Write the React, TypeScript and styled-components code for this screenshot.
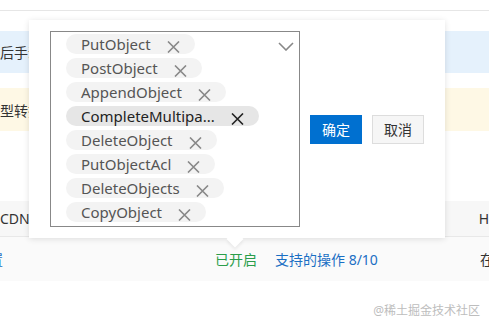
import styled, { createGlobalStyle } from "styled-components"

const GlobalStyle = createGlobalStyle`
  html, body {
    margin: 0;
    padding: 0;
    background: #fff;
  }
  body {
    font-family: "Noto Sans", "Noto Sans CJK SC", sans-serif;
    color: #333;
    overflow: hidden;
  }
`

const Page = styled.div`
  position: relative;
  width: 489px;
  height: 319px;
  overflow: hidden;
  display: flex;
  flex-direction: column;
`
const TopRule = styled.div`
  margin-top: 10px;
  height: 1px;
  background: #e6e6e6;
`
const Notice = styled.div<{ $tone: "info" | "warn" }>`
  display: flex;
  align-items: center;
  height: ${(p) => (p.$tone === "info" ? "44px" : "45px")};
  margin-top: ${(p) => (p.$tone === "info" ? "20px" : "15px")};
  background: ${(p) => (p.$tone === "info" ? "#e5f1fc" : "#fef8e5")};
  font-size: 14px;
  white-space: nowrap;
  color: #333;
`
const NoticeText = styled.span<{ $shift: number }>`
  margin-left: ${(p) => p.$shift}px;
`
const Table = styled.div`
  margin-top: 70px;
  display: flex;
  flex-direction: column;
`
const HeadRow = styled.div`
  display: flex;
  align-items: center;
  justify-content: space-between;
  height: 35px;
  background: #f7f7f7;
  border-bottom: 1px solid #e8e8e8;
  font-size: 14px;
  color: #333;
  white-space: nowrap;
`
const BodyRow = styled.div`
  display: flex;
  align-items: center;
  height: 44px;
  background: #fafafa;
  font-size: 14px;
  white-space: nowrap;
`
const Cell = styled.span<{ $color?: string; $width?: number }>`
  color: ${(p) => p.$color ?? "#333"};
  ${(p) => (p.$width ? `width: ${p.$width}px;` : "")}
  flex-shrink: 0;
`
const EdgeCell = styled(Cell)`
  margin-left: -25px;
  width: 240px;
`
const Watermark = styled.div`
  align-self: flex-end;
  margin-top: 20px;
  margin-right: 9px;
  font-size: 12px;
  color: #bdbdbd;
`

const Popover = styled.div`
  position: absolute;
  left: 29px;
  top: 20px;
  width: 416px;
  box-sizing: border-box;
  padding: 11px 21px;
  background: #fff;
  box-shadow: 0 1px 6px rgba(0, 0, 0, 0.12);
  display: flex;
  align-items: center;
  gap: 10px;
  &::after {
    content: "";
    position: absolute;
    left: 200px;
    bottom: -7px;
    width: 12px;
    height: 12px;
    background: #fff;
    transform: rotate(45deg);
    box-shadow: 2px 2px 3px rgba(0, 0, 0, 0.06);
  }
`
const SelectBox = styled.div`
  position: relative;
  width: 250px;
  height: 196px;
  box-sizing: border-box;
  border: 1px solid #888;
  padding: 2px 0 0 15px;
  display: flex;
  flex-direction: column;
  align-items: flex-start;
  gap: 4px;
  flex-shrink: 0;
`
const Chevron = styled.svg`
  position: absolute;
  right: 5px;
  top: 10px;
`
const Tag = styled.div<{ $active?: boolean }>`
  display: flex;
  align-items: center;
  height: 20px;
  padding: 0 15px;
  gap: 16px;
  border-radius: 10px;
  background: ${(p) => (p.$active ? "#e6e6e6" : "#f3f3f3")};
  color: ${(p) => (p.$active ? "#222" : "#555")};
  font-size: 15px;
  white-space: nowrap;
  svg {
    margin-top: 5px;
    stroke: ${(p) => (p.$active ? "#222" : "#888")};
  }
`
const Button = styled.button<{ $primary?: boolean }>`
  width: 52px;
  height: 29px;
  box-sizing: border-box;
  font-family: "Noto Sans CJK SC", sans-serif;
  font-size: 14px;
  border: 1px solid ${(p) => (p.$primary ? "#0070d0" : "#ddd")};
  background: ${(p) => (p.$primary ? "#0070d0" : "#f6f6f6")};
  color: ${(p) => (p.$primary ? "#fff" : "#333")};
  padding: 0;
  cursor: pointer;
`

function CloseIcon() {
  return (
    <svg width="13" height="12" viewBox="0 0 13 12" fill="none" strokeWidth="1.6">
      <path d="M1 0.5 L12 11.5 M12 0.5 L1 11.5" />
    </svg>
  )
}

const ops = [
  "PutObject",
  "PostObject",
  "AppendObject",
  "CompleteMultipa...",
  "DeleteObject",
  "PutObjectAcl",
  "DeleteObjects",
  "CopyObject",
]

export default function App() {
  return (
    <Page>
      <GlobalStyle />
      <TopRule />
      <Notice $tone="info">
        <NoticeText $shift={-56}>操作完成后手动刷新</NoticeText>
      </Notice>
      <Notice $tone="warn">
        <NoticeText $shift={-42}>存储类型转换说明</NoticeText>
      </Notice>
      <Table>
        <HeadRow>
          <Cell>CDN</Cell>
          <Cell>H</Cell>
        </HeadRow>
        <BodyRow>
          <EdgeCell $color="#1a6fc4">配置</EdgeCell>
          <Cell $color="#2a9d4a" $width={60}>已开启</Cell>
          <Cell $color="#1a6fc4" $width={205}>支持的操作 8/10</Cell>
          <Cell>在</Cell>
        </BodyRow>
      </Table>
      <Watermark>@稀土掘金技术社区</Watermark>

      <Popover>
        <SelectBox>
          {ops.map((op, i) => (
            <Tag key={op} $active={i === 3}>
              {op}
              <CloseIcon />
            </Tag>
          ))}
          <Chevron width="16" height="9" viewBox="0 0 16 9" fill="none" stroke="#888" strokeWidth="1.6">
            <path d="M1 1 L8 8 L15 1" />
          </Chevron>
        </SelectBox>
        <Button $primary>确定</Button>
        <Button>取消</Button>
      </Popover>
    </Page>
  )
}
